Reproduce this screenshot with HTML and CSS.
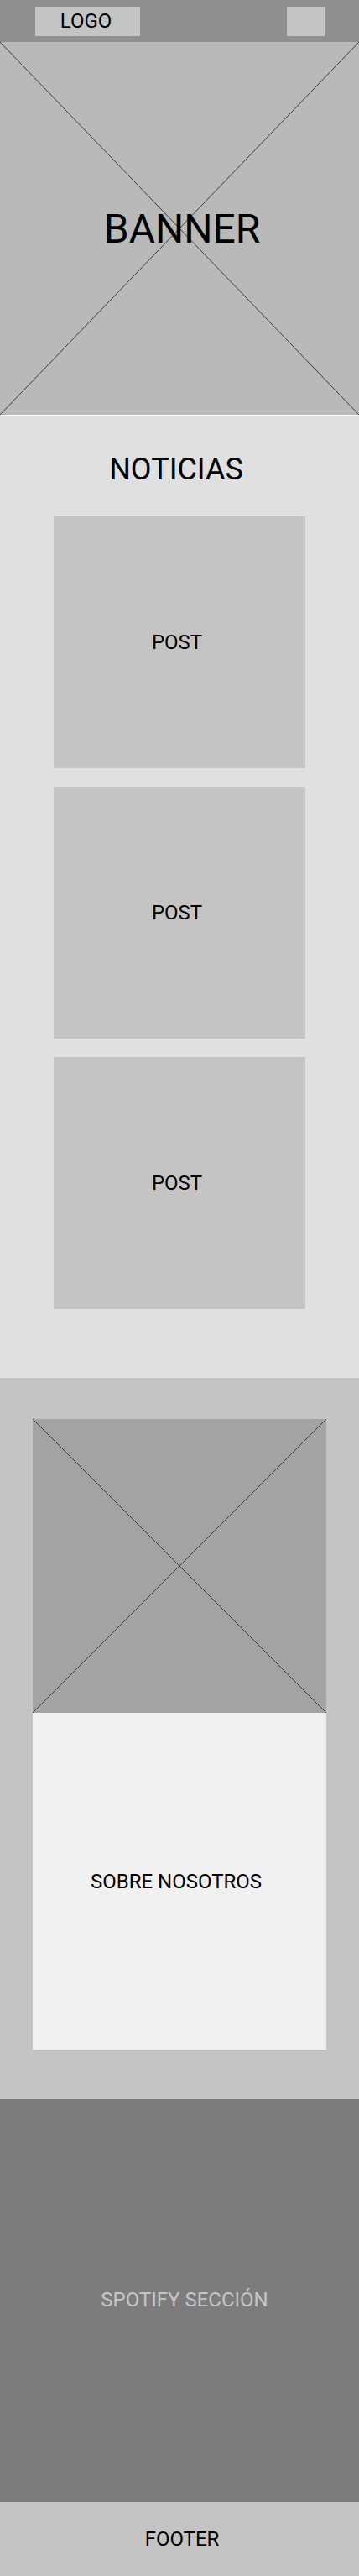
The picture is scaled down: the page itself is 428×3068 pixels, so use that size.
FILE: index.html
```html
<!DOCTYPE html>
<html lang="es">
<head>
<meta charset="utf-8">
<title>Wireframe</title>
<link rel="stylesheet" href="styles.css">
</head>
<body>
<header class="topbar">
  <div class="logo">LOGO</div>
  <div class="menu-btn"></div>
</header>
<section class="banner">
  <svg class="cross" viewBox="0 0 100 100" preserveAspectRatio="none" aria-hidden="true">
    <line x1="0" y1="0" x2="100" y2="100" vector-effect="non-scaling-stroke"/>
    <line x1="100" y1="0" x2="0" y2="100" vector-effect="non-scaling-stroke"/>
  </svg>
  <h1 class="banner-title">BANNER</h1>
</section>
<section class="news">
  <h2 class="news-title">NOTICIAS</h2>
  <div class="post">POST</div>
  <div class="post">POST</div>
  <div class="post">POST</div>
</section>
<section class="about">
  <div class="about-img">
    <svg class="cross" viewBox="0 0 100 100" preserveAspectRatio="none" aria-hidden="true">
      <line x1="0" y1="0" x2="100" y2="100" vector-effect="non-scaling-stroke"/>
      <line x1="100" y1="0" x2="0" y2="100" vector-effect="non-scaling-stroke"/>
    </svg>
  </div>
  <div class="about-text">SOBRE NOSOTROS</div>
</section>
<section class="spotify">
  <div class="spotify-title">SPOTIFY SECCIÓN</div>
</section>
<footer class="footer">FOOTER</footer>
</body>
</html>
```
FILE: styles.css
```css
* { box-sizing: border-box; margin: 0; padding: 0; }
html, body { background: #c4c4c4; }
body {
  font-family: Roboto, "Liberation Sans", sans-serif;
  color: #000;
  width: 428px;
}
.topbar {
  height: 50px;
  background: #8f8f8f;
  display: flex;
  justify-content: space-between;
  align-items: flex-start;
  padding: 8px 41px 0 42px;
}
.logo {
  width: 125px;
  height: 35px;
  background: #c4c4c4;
  font-size: 24px;
  line-height: 35px;
  text-align: center;
  padding-right: 4px;
}
.menu-btn {
  width: 45px;
  height: 35px;
  background: #c4c4c4;
}
.banner {
  position: relative;
  height: 445px;
  background: #b9b9b9;
  border-bottom: 1px solid #ffffff;
  display: flex;
  align-items: center;
  justify-content: center;
}
.cross {
  position: absolute;
  inset: 0;
  width: 100%;
  height: 100%;
}
.cross line {
  stroke: #3a3a3a;
  stroke-width: 1;
}
.banner-title {
  position: relative;
  font-size: 48px;
  font-weight: 400;
  line-height: 1;
  padding-top: 1px;
  padding-left: 6px;
}
.news {
  background: #e0e0e0;
  display: flex;
  flex-direction: column;
  align-items: center;
  padding: 46px 0 82px;
}
.news-title {
  font-size: 36px;
  font-weight: 400;
  line-height: 1;
  height: 37px;
  margin-bottom: 37px;
  padding-right: 8px;
}
.post {
  width: 300px;
  height: 300px;
  background: #c4c4c4;
  display: flex;
  align-items: center;
  justify-content: center;
  font-size: 24px;
  padding-right: 6px;
  margin-bottom: 22px;
}
.post:last-child { margin-bottom: 0; }
.about {
  background: #c4c4c4;
  display: flex;
  flex-direction: column;
  align-items: center;
  padding: 49px 0 59px;
}
.about-img {
  position: relative;
  width: 350px;
  height: 350px;
  background: #a3a3a3;
}
.about-text {
  width: 350px;
  height: 401px;
  background: #f1f1f1;
  display: flex;
  align-items: center;
  justify-content: center;
  font-size: 24px;
  padding-right: 8px;
}
.spotify {
  height: 480px;
  background: #7c7c7c;
  padding-top: 227px;
  text-align: center;
}
.spotify-title {
  font-size: 24px;
  line-height: 1;
  color: #c6c6c6;
  padding-left: 12px;
}
.footer {
  height: 88px;
  background: #c4c4c4;
  display: flex;
  align-items: center;
  justify-content: center;
  font-size: 24px;
  padding-left: 6px;
}
```
